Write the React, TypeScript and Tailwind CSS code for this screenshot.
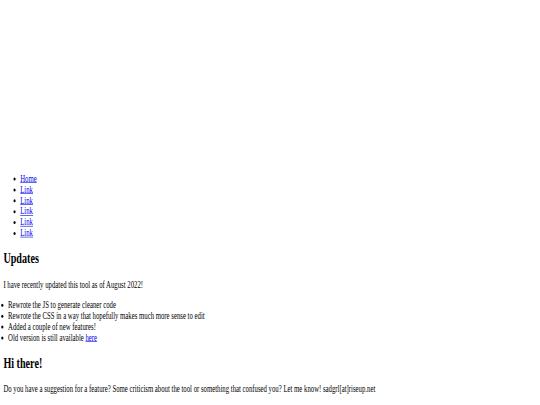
export default function App() {
  const link = "text-[#0000ee] underline";
  return (
    <div className="w-[540px] h-[405px] overflow-hidden bg-white">
      <div className="w-[1280px] origin-top-left scale-x-[0.421875] scale-y-[0.604] p-2 text-[16px] leading-[normal] text-black font-['Liberation_Serif',serif]">
        <div className="h-[263px]" />
        <ul className="my-4 pl-10 list-disc">
          <li><a className={link} href="#">Home</a></li>
          <li><a className={link} href="#">Link</a></li>
          <li><a className={link} href="#">Link</a></li>
          <li><a className={link} href="#">Link</a></li>
          <li><a className={link} href="#">Link</a></li>
          <li><a className={link} href="#">Link</a></li>
        </ul>
        <h2 className="text-[24px] leading-[normal] font-bold my-[19.92px]">Updates</h2>
        <p className="my-4">I have recently updated this tool as of August 2022!</p>
        <ul className="my-4 pl-[11px] list-disc">
          <li>Rewrote the JS to generate cleaner code</li>
          <li>Rewrote the CSS in a way that hopefully makes much more sense to edit</li>
          <li>Added a couple of new features!</li>
          <li>Old version is still available <a className={link} href="#">here</a></li>
        </ul>
        <h2 className="text-[24px] leading-[normal] font-bold my-[19.92px]">Hi there!</h2>
        <p className="my-4">Do you have a suggestion for a feature? Some criticism about the tool or something that confused you? Let me know! sadgrl[at]riseup.net</p>
      </div>
    </div>
  );
}
